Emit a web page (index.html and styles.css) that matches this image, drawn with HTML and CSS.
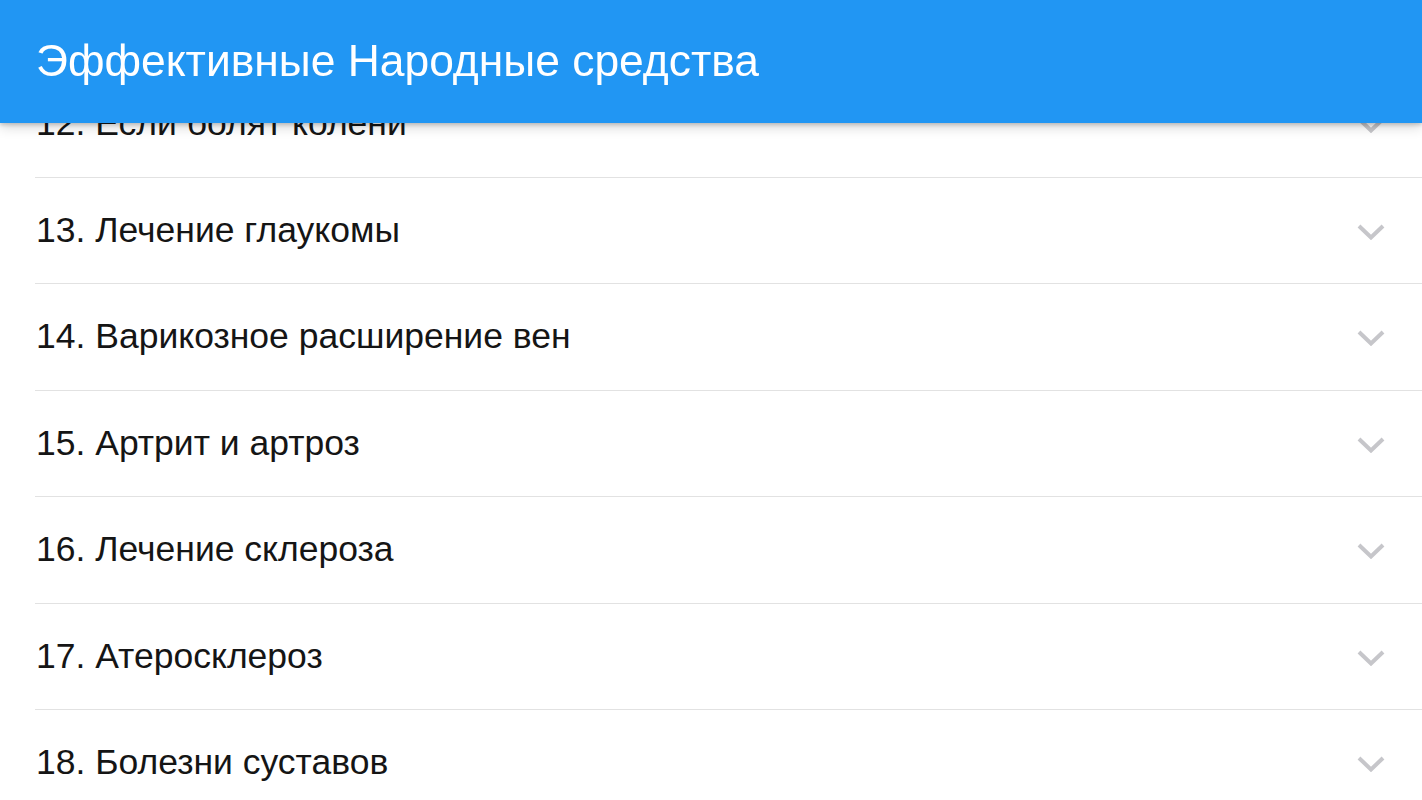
FILE: index.html
```html
<!DOCTYPE html>
<html lang="ru">
<head>
<meta charset="utf-8">
<title>Эффективные Народные средства</title>
<link rel="stylesheet" href="styles.css">
</head>
<body>
<header class="appbar">
  <h1 class="appbar-title">Эффективные Народные средства</h1>
</header>
<main class="list">
  <div class="row"><span class="row-text">12. Если болят колени</span><svg class="chev" viewBox="0 0 28 16"><path d="M2 2 L14 13.5 L26 2"/></svg></div>
  <div class="row"><span class="row-text">13. Лечение глаукомы</span><svg class="chev" viewBox="0 0 28 16"><path d="M2 2 L14 13.5 L26 2"/></svg></div>
  <div class="row"><span class="row-text">14. Варикозное расширение вен</span><svg class="chev" viewBox="0 0 28 16"><path d="M2 2 L14 13.5 L26 2"/></svg></div>
  <div class="row"><span class="row-text">15. Артрит и артроз</span><svg class="chev" viewBox="0 0 28 16"><path d="M2 2 L14 13.5 L26 2"/></svg></div>
  <div class="row"><span class="row-text">16. Лечение склероза</span><svg class="chev" viewBox="0 0 28 16"><path d="M2 2 L14 13.5 L26 2"/></svg></div>
  <div class="row"><span class="row-text">17. Атеросклероз</span><svg class="chev" viewBox="0 0 28 16"><path d="M2 2 L14 13.5 L26 2"/></svg></div>
  <div class="row"><span class="row-text">18. Болезни суставов</span><svg class="chev" viewBox="0 0 28 16"><path d="M2 2 L14 13.5 L26 2"/></svg></div>
</main>
</body>
</html>
```

FILE: styles.css
```css
html, body {
  margin: 0;
  padding: 0;
  background: #ffffff;
  font-family: "Liberation Sans", Arial, sans-serif;
  overflow: hidden;
}

.appbar {
  position: fixed;
  top: 0;
  left: 0;
  right: 0;
  height: 123px;
  background: #2196f3;
  display: flex;
  align-items: center;
  padding: 0 36px;
  box-shadow: 0 2px 4px rgba(0, 0, 0, 0.18), 0 4px 12px rgba(0, 0, 0, 0.16);
  z-index: 10;
}

.appbar-title {
  margin: 0;
  color: #ffffff;
  font-weight: 400;
  font-size: 44.4px;
  line-height: 1;
}

.list {
  padding-top: 71.4px;
  padding-left: 35px;
}

.row {
  height: 105.5px;
  border-bottom: 1px solid #e2e2e2;
  display: flex;
  align-items: center;
  justify-content: space-between;
  padding-left: 1px;
  padding-right: 36px;
}

.row-text {
  font-size: 35.5px;
  color: #151515;
  line-height: 1;
}

.chev {
  width: 28px;
  height: 16px;
  fill: none;
  stroke: #c6c6ca;
  stroke-width: 4;
  margin-right: 1px;
  margin-top: 2px;
}
```
